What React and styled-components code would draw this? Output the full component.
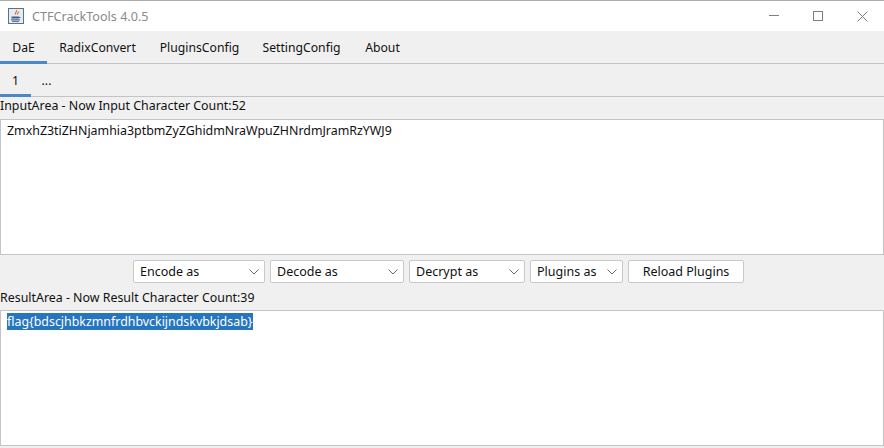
import React from 'react';
import styled, { createGlobalStyle } from 'styled-components';

const GlobalStyle = createGlobalStyle`
  html, body {
    margin: 0;
    padding: 0;
    background: #f0f0f0;
  }
`;

const Window = styled.div`
  width: 884px;
  height: 448px;
  overflow: hidden;
  display: flex;
  flex-direction: column;
  background-color: #f0f0f0;
  border-top: 1px solid #acacac;
  box-sizing: border-box;
  font-family: "Noto Sans", sans-serif;
  font-size: 12.2px;
  color: #111;
`;

const TitleBar = styled.div`
  height: 30px;
  flex: none;
  display: flex;
  align-items: center;
  background-color: #fff;
  padding-left: 8px;
`;

const AppTitle = styled.div`
  margin-left: 8px;
  font-size: 12.6px;
  color: #8a8a8a;
`;

const WindowButtons = styled.div`
  margin-left: auto;
  display: flex;
  align-items: center;
  gap: 34px;
  padding-right: 16px;
`;

const TabStrip = styled.div`
  display: flex;
  flex: none;
  height: 33px;
  box-sizing: border-box;
  border-bottom: 1px solid #c4c4c4;
`;

const Tab = styled.div`
  width: ${(p) => p.$width}px;
  display: flex;
  align-items: center;
  justify-content: center;
  box-sizing: border-box;
  padding-top: 2px;
  margin-bottom: -1px;
  border-bottom: 3px solid ${(p) => (p.$active ? '#4a88c7' : 'transparent')};
`;

const FieldLabel = styled.div`
  flex: none;
  height: ${(p) => p.$height}px;
  line-height: ${(p) => p.$line}px;
  font-size: 12.4px;
`;

const TextPane = styled.div`
  flex: none;
  height: 136px;
  box-sizing: border-box;
  background-color: #fff;
  border: 1px solid #c4c4c4;
  padding: 2px 6px;
  line-height: 18px;
  font-size: 12.4px;
`;

const Selected = styled.span`
  background-color: #2675bf;
  color: #fff;
  display: inline-block;
  line-height: 17px;
  padding-right: 1px;
`;

const Controls = styled.div`
  flex: none;
  height: 35px;
  display: flex;
  align-items: flex-start;
  justify-content: center;
  gap: 5px;
  padding: 5px 7px 0 0;
  box-sizing: border-box;
`;

const Dropdown = styled.div`
  width: ${(p) => p.$width}px;
  height: 23px;
  box-sizing: border-box;
  display: flex;
  align-items: center;
  justify-content: space-between;
  padding: 0 5px 0 6px;
  background-color: #fff;
  border: 1px solid #c9c9c9;
  border-radius: 2px;
  font-size: 12.5px;
`;

const ReloadButton = styled.div`
  width: 116px;
  height: 23px;
  box-sizing: border-box;
  display: flex;
  align-items: center;
  justify-content: center;
  background-color: #fff;
  border: 1px solid #c9c9c9;
  border-radius: 2px;
  font-size: 12.5px;
`;

const JavaIcon = () => (
  <svg width="16" height="16" viewBox="0 0 16 16">
    <rect x="0.5" y="0.5" width="15" height="15" fill="#e4ebf2" stroke="#5d7186" />
    <path d="M8.5 2c1 1.500-2 2.500-1 4.500M10.500 3.500c.5 1-1.500 1.500-1 3" fill="none" stroke="#e0702a" strokeWidth="1.200" />
    <path d="M3.500 8.500h7.500v2H3.500zM11 9h1.500v1H11z" fill="#3d5f85" />
    <path d="M3 11.800h9M4 13.300h7" stroke="#3d5f85" strokeWidth="1" />
  </svg>
);

const MinimizeIcon = () => (
  <svg width="10" height="10" viewBox="0 0 10 10">
    <path d="M0 4.500h10" stroke="#808080" strokeWidth="1" />
  </svg>
);

const MaximizeIcon = () => (
  <svg width="10" height="10" viewBox="0 0 10 10">
    <rect x="0.5" y="0.5" width="9" height="9" fill="none" stroke="#808080" />
  </svg>
);

const CloseIcon = () => (
  <svg width="11" height="11" viewBox="0 0 11 11">
    <path d="M0.500 0.500l10 10M10.500 0.500l-10 10" stroke="#808080" strokeWidth="1" />
  </svg>
);

const Chevron = () => (
  <svg width="10" height="6" viewBox="0 0 10 6">
    <path d="M0.500 0.500L5 5l4.500-4.500" fill="none" stroke="#6a6a6a" strokeWidth="1" />
  </svg>
);

const menuTabs = [
  { label: 'DaE', width: 47, active: true },
  { label: 'RadixConvert', width: 101 },
  { label: 'PluginsConfig', width: 103 },
  { label: 'SettingConfig', width: 101 },
  { label: 'About', width: 61 },
];

const dropdowns = [
  { label: 'Encode as', width: 132 },
  { label: 'Decode as', width: 134 },
  { label: 'Decrypt as', width: 116 },
  { label: 'Plugins as', width: 93 },
];

function App() {
  return (
    <Window>
      <GlobalStyle />
      <TitleBar>
        <JavaIcon />
        <AppTitle>CTFCrackTools 4.0.5</AppTitle>
        <WindowButtons>
          <MinimizeIcon />
          <MaximizeIcon />
          <CloseIcon />
        </WindowButtons>
      </TitleBar>
      <TabStrip>
        {menuTabs.map((tab) => (
          <Tab key={tab.label} $width={tab.width} $active={tab.active}>
            {tab.label}
          </Tab>
        ))}
      </TabStrip>
      <TabStrip>
        <Tab $width={31} $active>1</Tab>
        <Tab $width={31}>...</Tab>
      </TabStrip>
      <FieldLabel $height={22} $line={18}>InputArea - Now Input Character Count:52</FieldLabel>
      <TextPane>ZmxhZ3tiZHNjamhia3ptbmZyZGhidmNraWpuZHNrdmJramRzYWJ9</TextPane>
      <Controls>
        {dropdowns.map((item) => (
          <Dropdown key={item.label} $width={item.width}>
            {item.label}
            <Chevron />
          </Dropdown>
        ))}
        <ReloadButton>Reload Plugins</ReloadButton>
      </Controls>
      <FieldLabel $height={20} $line={15}>ResultArea - Now Result Character Count:39</FieldLabel>
      <TextPane>
        <Selected>flag{'{'}bdscjhbkzmnfrdhbvckijndskvbkjdsab{'}'}</Selected>
      </TextPane>
    </Window>
  );
}

export default App;
